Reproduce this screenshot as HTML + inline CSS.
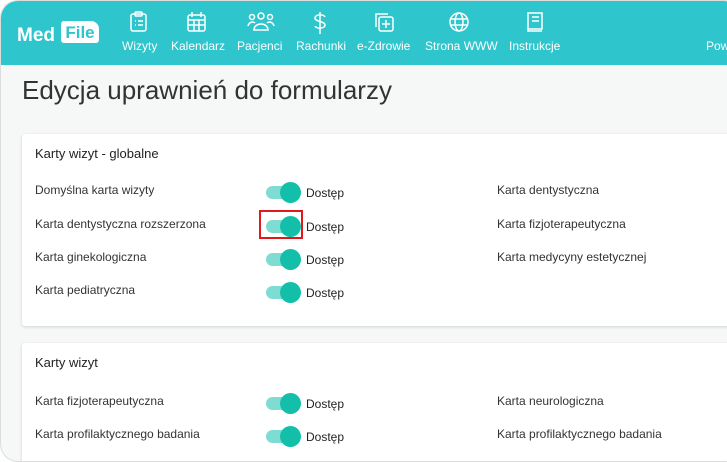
<!DOCTYPE html><html><head><meta charset="utf-8"><style>
html,body{margin:0;width:727px;height:443px;overflow:hidden;background:#fff;font-family:"Liberation Sans",Roboto,sans-serif;}
.win{position:absolute;left:0;top:0;width:740px;height:460px;border-radius:18px;overflow:hidden;background:#f6f7f7;border:1px solid #ddd}
.hdr{position:absolute;left:0;top:0;right:0;height:64px;background:#2fc5cc;color:#fff}
.nav{position:absolute;top:38px;font-size:12px;color:#fff}
.ic{position:absolute;top:10px}
h1{position:absolute;left:21px;top:74px;margin:0;font-weight:normal;font-size:26px;color:#333}
.card{position:absolute;left:21px;width:720px;background:#fff;box-shadow:0 1px 3px rgba(0,0,0,.15);border-radius:3px}
.ct{position:absolute;left:13px;font-size:13px;color:#222}
.l{position:absolute;left:13px;font-size:12px;color:#333}
.r{position:absolute;left:475px;font-size:12px;color:#333}
.tg{position:absolute;left:244px;width:34px;height:13px;border-radius:7px;background:#7fdcd3}
.tg:after{content:"";position:absolute;left:14px;top:-4px;width:21px;height:21px;border-radius:50%;background:#14bfa9}
.d{position:absolute;left:284px;font-size:12px;color:#222}
</style></head><body><div class="win">
<div class="hdr">
<div style="position:absolute;left:16px;top:24px;font-weight:bold;font-size:19px">Med</div>
<div style="position:absolute;left:60px;top:20px;width:38px;height:22px;background:#fff;border-radius:3px 8px 3px 3px;color:#2fc5cc;font-weight:bold;font-size:17px;text-align:center;line-height:23px">File</div>
<svg class="ic" style="left:128px" width="20" height="22" fill="none" stroke="#fff" stroke-width="1.5"><rect x="2" y="3" width="15" height="17" rx="2"/><rect x="6" y="1" width="7" height="4" rx="1"/><path d="M6 10h1M9 10h5M6 14h1M9 14h5"/></svg>
<svg class="ic" style="left:186px" width="20" height="22" fill="none" stroke="#fff" stroke-width="1.5"><rect x="1" y="4" width="17" height="16" rx="2"/><path d="M5 1v5M14 1v5M1 9h17M1 14h17M7 9v11M12 9v11"/></svg>
<svg class="ic" style="left:246px" width="28" height="22" fill="none" stroke="#fff" stroke-width="1.5"><circle cx="14" cy="5" r="3"/><circle cx="5" cy="6" r="2.5"/><circle cx="23" cy="6" r="2.5"/><path d="M7 19c0-8 14-8 14 0zM1 15c1-4 5-5 7-3M27 15c-1-4-5-5-7-3"/></svg>
<svg class="ic" style="left:312px" width="14" height="24" fill="none" stroke="#fff" stroke-width="1.5"><path d="M7 1v22M12 6c-1-3-10-3-10 1s10 3 10 7-9 4-10 1"/></svg>
<svg class="ic" style="left:373px" width="22" height="22" fill="none" stroke="#fff" stroke-width="1.5"><path d="M2 16V3h12"/><rect x="5" y="6" width="14" height="14" rx="2"/><path d="M12 9v8M8 13h8"/></svg>
<svg class="ic" style="left:447px" width="22" height="22" fill="none" stroke="#fff" stroke-width="1.5"><circle cx="11" cy="11" r="9"/><ellipse cx="11" cy="11" rx="4" ry="9"/><path d="M2 8h18M2 14h18"/></svg>
<svg class="ic" style="left:524px" width="20" height="22" fill="none" stroke="#fff" stroke-width="1.5"><path d="M3 2h14v16H3zM3 18v2h14M7 6h7M7 10h7"/></svg>
<div class="nav" style="left:121px">Wizyty</div><div class="nav" style="left:170px">Kalendarz</div><div class="nav" style="left:236px">Pacjenci</div><div class="nav" style="left:295px">Rachunki</div><div class="nav" style="left:356px">e-Zdrowie</div><div class="nav" style="left:424px">Strona WWW</div><div class="nav" style="left:508px">Instrukcje</div><div class="nav" style="left:705px">Pow</div>
</div>
<h1>Edycja uprawnień do formularzy</h1>
<div class="card" style="top:133px;height:192px">
<div class="ct" style="top:12px">Karty wizyt - globalne</div>
<div class="l" style="top:49px">Domyślna karta wizyty</div><div class="tg" style="top:52px"></div><div class="d" style="top:52px">Dostęp</div><div class="r" style="top:49px">Karta dentystyczna</div>
<div class="l" style="top:83px">Karta dentystyczna rozszerzona</div><div class="tg" style="top:86px"></div><div class="d" style="top:86px">Dostęp</div><div class="r" style="top:83px">Karta fizjoterapeutyczna</div>
<div style="position:absolute;left:237px;top:76px;width:44px;height:29px;border:2px solid #e0191d;box-sizing:border-box"></div>
<div class="l" style="top:116px">Karta ginekologiczna</div><div class="tg" style="top:119px"></div><div class="d" style="top:119px">Dostęp</div><div class="r" style="top:116px">Karta medycyny estetycznej</div>
<div class="l" style="top:149px">Karta pediatryczna</div><div class="tg" style="top:152px"></div><div class="d" style="top:152px">Dostęp</div>
</div>
<div class="card" style="top:342px;height:120px">
<div class="ct" style="top:12px">Karty wizyt</div>
<div class="l" style="top:51px">Karta fizjoterapeutyczna</div><div class="tg" style="top:54px"></div><div class="d" style="top:54px">Dostęp</div><div class="r" style="top:51px">Karta neurologiczna</div>
<div class="l" style="top:84px">Karta profilaktycznego badania</div><div class="tg" style="top:87px"></div><div class="d" style="top:87px">Dostęp</div><div class="r" style="top:84px">Karta profilaktycznego badania</div>
</div>
</div></body></html>
